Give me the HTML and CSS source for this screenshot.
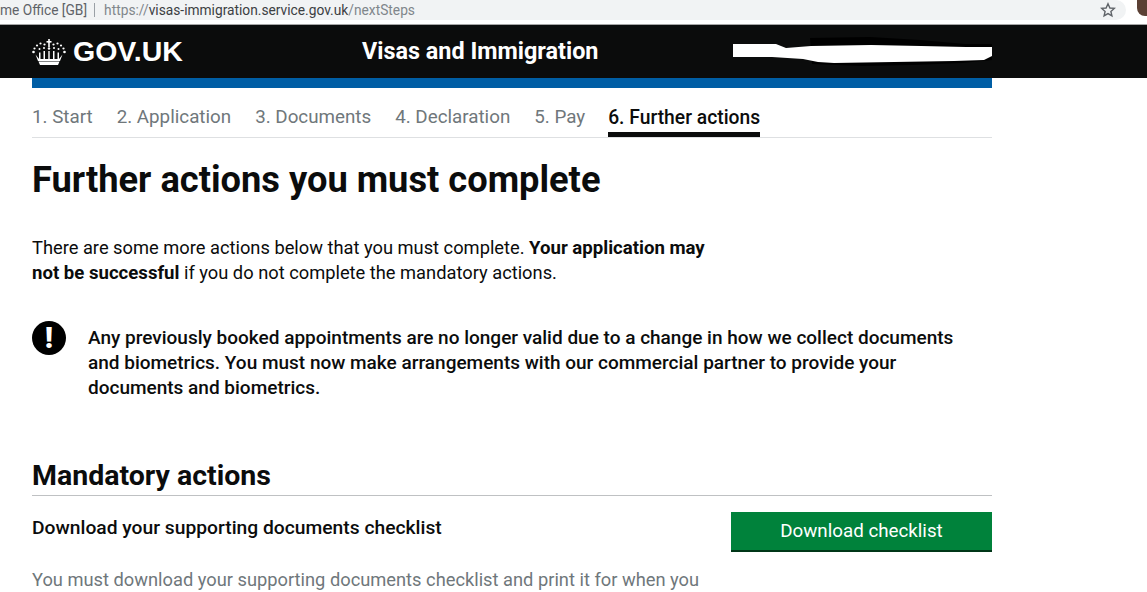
FILE: index.html
```html
<!DOCTYPE html>
<html lang="en">
<head>
  <meta charset="UTF-8">
  <title>Further actions - Visas and Immigration</title>
  <link rel="stylesheet" href="styles.css">
</head>
<body>
  <div class="browser-bar">
    <div class="omnibox">
      <span class="owner">me Office [GB]</span>
      <span class="divider"></span>
      <span class="url">https://<span class="url-host">visas-immigration.service.gov.uk</span>/nextSteps</span>
      <svg class="star" viewBox="0 0 16 16" width="16" height="16">
        <path d="M8 1.8l1.9 4.2 4.4.4-3.4 3 1 4.5L8 11.6l-3.9 2.3 1-4.5-3.4-3 4.4-.4z" fill="none" stroke="#5f6368" stroke-width="1.4"/>
      </svg>
    </div>
    <span class="avatar"></span>
  </div>

  <header class="site-header">
    <div class="header-inner">
      <a class="logo">
        <svg class="crown" viewBox="0 0 34 26" width="34" height="26">
          <g fill="#fff">
            <rect x="16.2" y="0" width="1.6" height="8"/>
            <rect x="14.5" y="2" width="5" height="1.6"/>
            <circle cx="12.5" cy="5.5" r="1.1"/>
            <circle cx="21.5" cy="5.5" r="1.1"/>
            <circle cx="8.5" cy="4.5" r="1.1"/>
            <circle cx="25.5" cy="4.5" r="1.1"/>
            <circle cx="5" cy="6.5" r="1.1"/>
            <circle cx="29" cy="6.5" r="1.1"/>
            <circle cx="2.5" cy="9.5" r="1.1"/>
            <circle cx="31.5" cy="9.5" r="1.1"/>
            <circle cx="1.5" cy="13" r="1.3"/>
            <circle cx="32.5" cy="13" r="1.3"/>
            <circle cx="7.5" cy="10" r="1"/>
            <circle cx="12" cy="9" r="1"/>
            <circle cx="17" cy="9.5" r="1.2"/>
            <circle cx="22" cy="9" r="1"/>
            <circle cx="26.5" cy="10" r="1"/>
            <path d="M3.5 15.500l3.500 4.500v-6.500h1.500v6.500h3v-8h1.500v8h3.300v-8h1.400v8h3.300v-8h1.500v8h3v-6.500H27V20l3.500-4.500-2.500 6.500H6z"/>
            <path d="M6.500 22.500h21L26 26H8z"/>
          </g>
        </svg>
        <span>GOV.UK</span>
      </a>
      <span class="service-name">Visas and Immigration</span>
      <svg class="redaction" viewBox="0 0 260 32" width="260" height="32">
        <path d="M78 2l60-1 50 3 45 4 27 0 0 16-30 3-50 2-50 1-50-2z" fill="#000"/>
        <path d="M1 8h43l10 4 25-2 60-1 50 1 45 1 26 0v9l-8 4-30 1-60 1-60 1-16-1-15-3-31-2-39 0z" fill="#fff"/>
      </svg>
    </div>
  </header>

  <div class="page">
    <div class="blue-bar"></div>

    <nav class="steps">
      <span class="step">1. Start</span>
      <span class="step">2. Application</span>
      <span class="step">3. Documents</span>
      <span class="step">4. Declaration</span>
      <span class="step">5. Pay</span>
      <span class="step current">6. Further actions</span>
    </nav>

    <h1>Further actions you must complete</h1>

    <p class="intro">There are some more actions below that you must complete. <strong>Your application may</strong><br><strong>not be successful</strong> if you do not complete the mandatory actions.</p>

    <div class="warning">
      <span class="warning-icon">!</span>
      <p>Any previously booked appointments are no longer valid due to a change in how we collect documents and biometrics. You must now make arrangements with our commercial partner to provide your documents and biometrics.</p>
    </div>

    <h2>Mandatory actions</h2>

    <div class="action">
      <div class="action-text">
        <h3>Download your supporting documents checklist</h3>
        <p>You must download your supporting documents checklist and print it for when you</p>
      </div>
      <button class="btn">Download checklist</button>
    </div>
  </div>
</body>
</html>
```

FILE: styles.css
```css
body {
  margin: 0;
  background: #fff;
  font-family: "Roboto", sans-serif;
  color: #0b0c0c;
}
.browser-bar {
  display: flex;
  align-items: flex-start;
  height: 24px;
  background: #fff;
  border-bottom: 1px solid #a6a6a6;
}
.omnibox {
  display: flex;
  align-items: center;
  width: 1127px;
  height: 20px;
  background: #f1f3f4;
  border-radius: 0 14px 14px 0;
  font-size: 13.75px;
  color: #5f6368;
}
.divider {
  width: 1px;
  height: 14px;
  margin: 0 9px 0 7px;
  background: #9aa0a6;
}
.url {
  color: #80868b;
}
.url-host {
  color: #3c4043;
}
.star {
  margin-left: auto;
  margin-right: 10px;
}
.avatar {
  width: 10px;
  height: 16px;
  margin-left: 11px;
  background: #5b4034;
  border-radius: 0 0 0 8px;
}
.site-header {
  height: 53px;
  background: #0b0c0c;
}
.header-inner {
  display: flex;
  align-items: center;
  width: 960px;
  height: 53px;
  margin-left: 32px;
}
.logo {
  display: flex;
  align-items: center;
  gap: 7px;
  width: 330px;
  color: #fff;
  font-family: "Liberation Sans", sans-serif;
  font-size: 28.5px;
  font-weight: bold;
}
.service-name {
  padding-bottom: 2px;
  color: #fff;
  font-size: 23.4px;
  font-weight: 700;
}
.redaction {
  margin-left: auto;
}
.page {
  width: 960px;
  margin-left: 32px;
}
.blue-bar {
  height: 10px;
  background: #005ea5;
}
.steps {
  display: flex;
  gap: 24px;
  height: 50px;
  border-bottom: 1px solid #dee0e2;
  box-sizing: border-box;
  padding-top: 16px;
  font-size: 18.8px;
  color: #6f777b;
}
.step {
  height: 33px;
  box-sizing: border-box;
  line-height: 26px;
}
.current {
  margin-left: -1px;
  color: #0b0c0c;
  font-size: 19.3px;
  font-weight: 500;
  line-height: 27px;
  border-bottom: 5px solid #0b0c0c;
}
h1 {
  margin: 20px 0 0;
  font-size: 36.25px;
  line-height: 44px;
  font-weight: 700;
}
.intro {
  margin: 33px 0 0;
  font-size: 18.3px;
  line-height: 25px;
}
.intro strong {
  font-size: 18.6px;
  line-height: 1;
}
.warning {
  display: flex;
  gap: 22px;
  width: 925px;
  margin-top: 36px;
}
.warning-icon {
  flex: none;
  width: 34px;
  height: 34px;
  border-radius: 50%;
  background: #000;
  color: #fff;
  text-align: center;
  font-size: 30px;
  font-weight: 900;
  line-height: 34px;
}
.warning p {
  margin: 4px 0 0;
  font-size: 19px;
  line-height: 25px;
  font-weight: 500;
}
h2 {
  margin: 58px 0 0;
  padding-bottom: 1px;
  border-bottom: 1px solid #bfc1c3;
  font-size: 28.5px;
  line-height: 36px;
  font-weight: 700;
}
.action {
  display: flex;
  justify-content: space-between;
  align-items: flex-start;
  margin-top: 16px;
}
.action-text {
  width: 680px;
}
h3 {
  margin: 3px 0 0;
  font-size: 19.25px;
  line-height: 25px;
  font-weight: 500;
}
.action-text p {
  margin: 29px 0 0;
  font-size: 18.3px;
  line-height: 22px;
  color: #6f777b;
}
.btn {
  width: 261px;
  height: 40px;
  padding: 0;
  border: 0;
  border-bottom: 2px solid #003618;
  background: #00823b;
  color: #fff;
  font-family: inherit;
  font-size: 18.75px;
}
```
